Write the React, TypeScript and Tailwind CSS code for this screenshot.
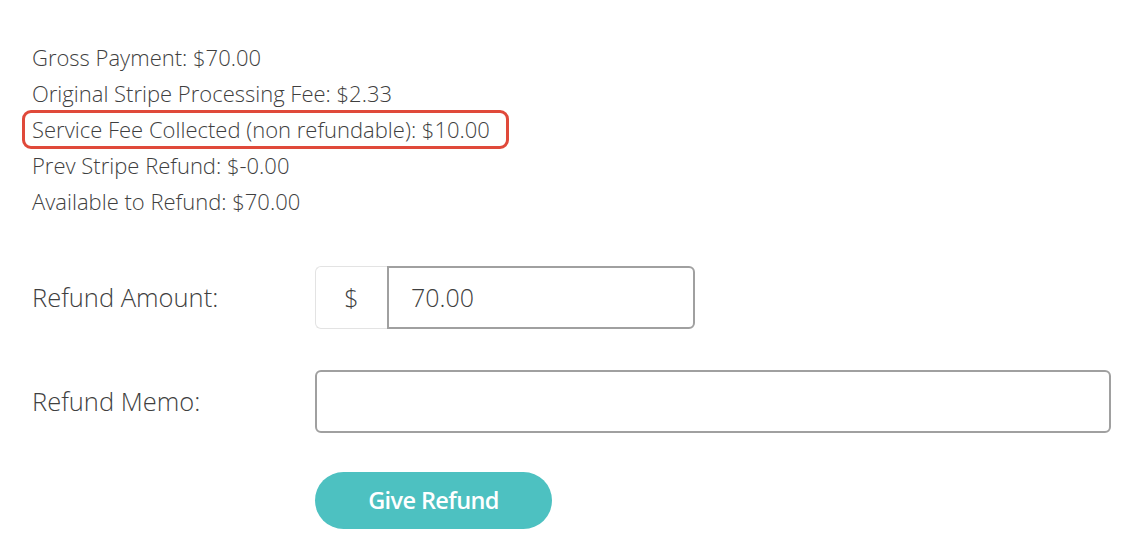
import React from "react";

const info = [
  "Gross Payment: $70.00",
  "Original Stripe Processing Fee: $2.33",
  "Service Fee Collected (non refundable): $10.00",
  "Prev Stripe Refund: $-0.00",
  "Available to Refund: $70.00",
];

export default function App() {
  return (
    <div
      className="min-h-[547px] w-full bg-white pl-[32px] pt-[39px] text-[#3f3f3f]"
      style={{ fontFamily: '"Open Sans", "Liberation Sans", sans-serif' }}
    >
      <div className="flex flex-col">
        {info.map((line, i) =>
          i === 2 ? (
            <div key={i} className="relative h-[36px] whitespace-nowrap text-[22px] leading-[36px] font-light">
              <span className="absolute -left-[10px] top-[-1px] h-[39px] w-[487px] rounded-[9px] border-[3px] border-[#e0493a]" />
              {line}
            </div>
          ) : (
            <div key={i} className="h-[36px] whitespace-nowrap text-[22px] leading-[36px] font-light">
              {line}
            </div>
          )
        )}
      </div>

      <div className="mt-[47px] flex items-center">
        <label className="w-[283px] text-[25.5px] font-light">Refund Amount:</label>
        <div className="flex h-[63px]">
          <div className="flex w-[72px] items-center justify-center rounded-l-[6px] border border-r-0 border-[#e3e3e3] text-[25px] font-light">
            $
          </div>
          <input
            className="w-[308px] rounded-r-[6px] border-2 border-[#a0a0a0] px-[22px] text-[25px] font-light text-[#3f3f3f] outline-none"
            defaultValue="70.00"
          />
        </div>
      </div>

      <div className="mt-[41px] flex items-center">
        <label className="w-[283px] text-[25.5px] font-light">Refund Memo:</label>
        <input className="h-[63px] w-[796px] rounded-[6px] border-2 border-[#a0a0a0] px-[22px] text-[25px] outline-none" />
      </div>

      <div className="mt-[39px] pl-[283px]">
        <button className="h-[57px] w-[237px] rounded-full bg-[#4dc1c1] text-[23.5px] font-semibold tracking-[-0.6px] text-white">
          Give Refund
        </button>
      </div>
    </div>
  );
}
